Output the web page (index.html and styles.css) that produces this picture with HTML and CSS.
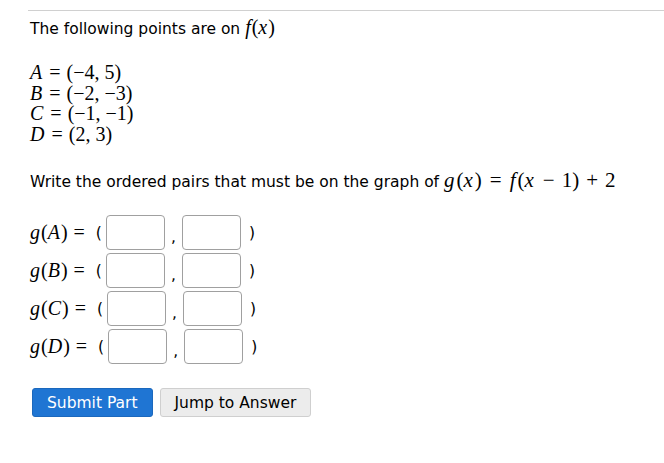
FILE: index.html
```html
<!DOCTYPE html>
<html>
<head>
<meta charset="utf-8">
<link rel="stylesheet" href="styles.css">
</head>
<body>
<div class="rule"></div>
<div class="content">
  <p class="intro">The following points are on <span class="m"><i>f</i>(<i>x</i>)</span></p>
  <div class="points">
    <div class="m"><i>A</i><span class="rel">=</span>(−4,<span class="th"></span>5)</div>
    <div class="m"><i>B</i><span class="rel">=</span>(−2,<span class="th"></span>−3)</div>
    <div class="m"><i>C</i><span class="rel">=</span>(−1,<span class="th"></span>−1)</div>
    <div class="m"><i>D</i><span class="rel">=</span>(2,<span class="th"></span>3)</div>
  </div>
  <p class="prompt">Write the ordered pairs that must be on the graph of <span class="m wide"><i>g</i>(<i>x</i>)<span class="rel">=</span><i>f</i>(<i>x</i><span class="bin">−</span>1)<span class="bin">+</span>2</span></p>
  <div class="answers">
    <div class="row"><span class="m lbl"><i>g</i>(<i>A</i>)<span class="rel">=</span></span><span class="paren">(</span><span class="box"></span><span class="comma">,</span><span class="box"></span><span class="paren close">)</span></div>
    <div class="row"><span class="m lbl"><i>g</i>(<i>B</i>)<span class="rel">=</span></span><span class="paren">(</span><span class="box"></span><span class="comma">,</span><span class="box"></span><span class="paren close">)</span></div>
    <div class="row"><span class="m lbl"><i>g</i>(<i>C</i>)<span class="rel">=</span></span><span class="paren">(</span><span class="box"></span><span class="comma">,</span><span class="box"></span><span class="paren close">)</span></div>
    <div class="row"><span class="m lbl"><i>g</i>(<i>D</i>)<span class="rel">=</span></span><span class="paren">(</span><span class="box"></span><span class="comma">,</span><span class="box"></span><span class="paren close">)</span></div>
  </div>
  <div class="buttons">
    <button class="btn primary">Submit Part</button>
    <button class="btn secondary">Jump to Answer</button>
  </div>
</div>
</body>
</html>
```

FILE: styles.css
```css
html, body {
  margin: 0;
  padding: 0;
  background: #fff;
}
body {
  font-family: "DejaVu Sans", Tahoma, sans-serif;
  font-size: 15.5px;
  color: #000;
}
.rule {
  margin: 10px 0 0 28px;
  border-top: 1px solid #d0d0d0;
}
.content {
  padding-left: 30px;
}
.m {
  font-family: "Liberation Serif", "DejaVu Serif", serif;
  font-size: 20px;
}
.m i {
  font-style: italic;
  padding-right: 1px;
}
.rel {
  display: inline-block;
  margin: 0 6px;
}
.bin {
  display: inline-block;
  margin: 0 5px;
}
.wide {
  font-size: 21px;
}
.wide i {
  padding-right: 2px;
}
.wide .rel {
  margin: 0 8px;
}
.wide .bin {
  margin: 0 7px;
}
.th {
  display: inline-block;
  width: 5px;
}
.intro {
  margin: 3px 0 0 0;
  line-height: 26px;
}
.points {
  margin-top: 20px;
}
.points .m {
  line-height: 20.5px;
}
.prompt {
  margin: 23px 0 0 0;
  line-height: 26px;
}
.answers {
  margin-top: 20px;
  display: flex;
  flex-direction: column;
  gap: 3px;
}
.row {
  display: flex;
  align-items: center;
  height: 35px;
}
.lbl {
  padding-right: 5px;
}
.paren {
  font-size: 15.5px;
  margin-right: 4px;
}
.paren.close {
  margin-left: 8px;
  margin-right: 0;
}
.box {
  box-sizing: border-box;
  width: 59px;
  height: 35px;
  border: 1px solid #a0a0a0;
  border-radius: 4px;
  background: #fff;
}
.comma {
  width: 17px;
  text-align: center;
  align-self: flex-end;
  margin-bottom: 4px;
}
.buttons {
  margin-top: 24px;
  display: flex;
  gap: 7px;
}
.btn {
  font-family: "DejaVu Sans", Tahoma, sans-serif;
  font-size: 15.5px;
  height: 29px;
  padding: 0 14px;
  border-radius: 3px;
  cursor: pointer;
}
.primary {
  background: #1f75d3;
  color: #fff;
  border: 1px solid #1b68bd;
  margin-left: 2px;
}
.secondary {
  background: #ececec;
  color: #000;
  border: 1px solid #cfcfcf;
}
```
